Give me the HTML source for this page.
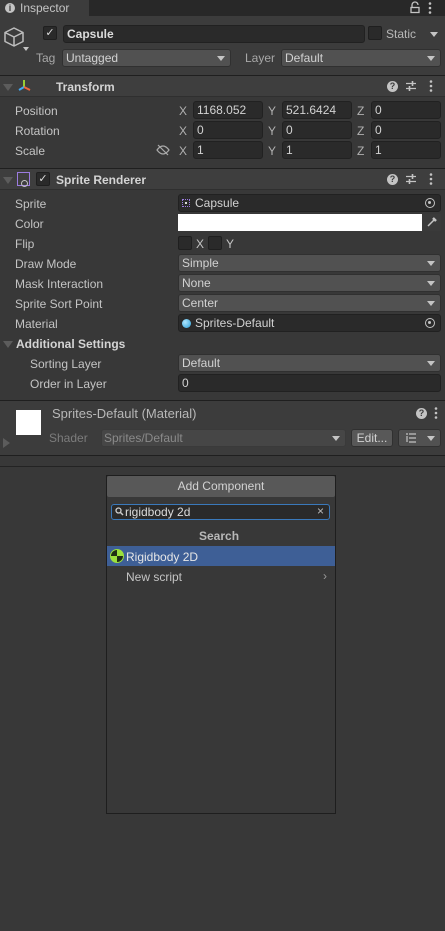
<!DOCTYPE html>
<html><head><meta charset="utf-8"><style>
*{margin:0;padding:0;box-sizing:border-box}
body{width:445px;height:931px;background:#383838;position:relative;overflow:hidden;font-family:"Liberation Sans",sans-serif;font-size:12px;color:#c4c4c4}
div,span,svg{position:absolute}
.t{white-space:nowrap;line-height:14px}
.f{background:#2a2a2a;border:1px solid #212121;border-radius:3px;height:18px;color:#d2d2d2;padding-left:3px;line-height:16px;white-space:nowrap}
.d{background:#515151;border:1px solid #303030;border-radius:3px;height:18px;color:#d2d2d2;padding-left:3px;line-height:16px;white-space:nowrap}
.d:after{content:"";position:absolute;right:5px;top:6px;border-left:4px solid transparent;border-right:4px solid transparent;border-top:5px solid #c4c4c4}
.hdr{left:0;width:445px;background:#3e3e3e;border-top:1px solid #1f1f1f;border-bottom:1px solid #2f2f2f}
.tri{border-left:5px solid transparent;border-right:5px solid transparent;border-top:7px solid #5c5c5c}
.cb{width:14px;height:14px;background:#2a2a2a;border:1px solid #1f1f1f;border-radius:2px}
.b{font-weight:bold;color:#d4d4d4}
.ax{color:#b0b0b0}
.q{width:11px;height:11px;border-radius:50%;background:#c4c4c4;color:#3e3e3e;font-size:9px;font-weight:bold;line-height:11px;text-align:center}
</style></head><body>
<div style="left:0;top:0;width:445px;height:16px;background:#282828"></div>
<div style="left:0;top:0;width:89px;height:16px;background:#3c3c3c"></div>
<div style="left:5px;top:3px;width:10px;height:10px;border-radius:50%;background:#c4c4c4;color:#3c3c3c;font-size:9px;font-weight:bold;line-height:10px;text-align:center">i</div>
<div class="t" style="left:20px;top:1px">Inspector</div>
<svg style="left:409px;top:1px" width="12" height="13"><path d="M3 6V4a3 3 0 0 1 6 0" fill="none" stroke="#c4c4c4" stroke-width="1.3"/><rect x="2" y="6.5" width="8" height="5" fill="none" stroke="#c4c4c4" stroke-width="1.3"/></svg>
<svg style="left:427px;top:1px" width="6" height="14"><circle cx="3" cy="2.5" r="1.3" fill="#c4c4c4"/><circle cx="3" cy="7" r="1.3" fill="#c4c4c4"/><circle cx="3" cy="11.5" r="1.3" fill="#c4c4c4"/></svg>
<div style="left:0;top:16px;width:445px;height:59px;background:#3c3c3c"></div>
<svg style="left:3px;top:26px" width="22" height="22" viewBox="0 0 22 22"><path d="M11 2 L20 6.5 V15.5 L11 20 L2 15.5 V6.5 Z M2 6.5 L11 11 L20 6.5 M11 11 V20" fill="none" stroke="#bdbdbd" stroke-width="1.5" stroke-linejoin="round"/></svg>
<div style="left:23px;top:47px;border-left:3px solid transparent;border-right:3px solid transparent;border-top:4px solid #c4c4c4"></div>
<div class="cb" style="left:43px;top:26px;color:#ddd;font-size:11px;line-height:12px;text-align:center">✓</div>
<div class="f b" style="left:63px;top:25px;width:302px;font-weight:bold;color:#dcdcdc">Capsule</div>
<div class="cb" style="left:368px;top:26px"></div>
<div class="t" style="left:386px;top:27px;color:#b8b8b8">Static</div>
<div style="left:430px;top:32px;border-left:4px solid transparent;border-right:4px solid transparent;border-top:5px solid #c4c4c4"></div>
<div class="t" style="left:36px;top:51px;color:#a8a8a8">Tag</div>
<div class="d" style="left:62px;top:49px;width:169px">Untagged</div>
<div class="t" style="left:245px;top:51px;color:#a8a8a8">Layer</div>
<div class="d" style="left:281px;top:49px;width:160px">Default</div>
<div class="hdr" style="top:75px;height:22px"></div>
<div class="tri" style="left:3px;top:84px"></div>
<svg style="left:17px;top:79px" width="15" height="14"><path d="M7 1V8" stroke="#9acd32" stroke-width="2"/><path d="M7 8L2 11" stroke="#3fa9f5" stroke-width="2"/><path d="M7 8L13 11" stroke="#f0643c" stroke-width="2"/></svg>
<div class="t b" style="left:56px;top:80px">Transform</div>
<div class="q" style="left:387px;top:81px">?</div>
<svg style="left:405px;top:80px" width="12" height="12"><path d="M1 3.5H11M1 8.5H11" stroke="#c4c4c4" stroke-width="1.3"/><path d="M7.5 1V6M4.5 6V11" stroke="#c4c4c4" stroke-width="1.6"/></svg>
<svg style="left:428px;top:79px" width="6" height="14"><circle cx="3" cy="2.5" r="1.3" fill="#c4c4c4"/><circle cx="3" cy="7" r="1.3" fill="#c4c4c4"/><circle cx="3" cy="11.5" r="1.3" fill="#c4c4c4"/></svg>
<div class="t" style="left:15px;top:104px">Position</div>
<div class="t" style="left:15px;top:124px">Rotation</div>
<div class="t" style="left:15px;top:144px">Scale</div>
<svg style="left:156px;top:144px" width="14" height="12"><path d="M1 6 Q4 2 7 2 Q10 2 13 6 Q10 10 7 10 Q4 10 1 6Z" fill="none" stroke="#aaa" stroke-width="1.2"/><path d="M2 1L12 11" stroke="#aaa" stroke-width="1.2"/></svg>
<div class="t ax" style="left:179px;top:104px">X</div><div class="f" style="left:193px;top:101px;width:70px">1168.052</div>
<div class="t ax" style="left:268px;top:104px">Y</div><div class="f" style="left:282px;top:101px;width:70px">521.6424</div>
<div class="t ax" style="left:357px;top:104px">Z</div><div class="f" style="left:371px;top:101px;width:70px">0</div>
<div class="t ax" style="left:179px;top:124px">X</div><div class="f" style="left:193px;top:121px;width:70px">0</div>
<div class="t ax" style="left:268px;top:124px">Y</div><div class="f" style="left:282px;top:121px;width:70px">0</div>
<div class="t ax" style="left:357px;top:124px">Z</div><div class="f" style="left:371px;top:121px;width:70px">0</div>
<div class="t ax" style="left:179px;top:144px">X</div><div class="f" style="left:193px;top:141px;width:70px">1</div>
<div class="t ax" style="left:268px;top:144px">Y</div><div class="f" style="left:282px;top:141px;width:70px">1</div>
<div class="t ax" style="left:357px;top:144px">Z</div><div class="f" style="left:371px;top:141px;width:70px">1</div>
<div class="hdr" style="top:168px;height:22px"></div>
<div class="tri" style="left:3px;top:177px"></div>
<div style="left:17px;top:172px;width:13px;height:14px;border:1px solid #9b7be0"></div>
<div style="left:21px;top:180px;width:7px;height:7px;border:1.5px solid #c4c4c4;border-radius:50%"></div>
<div class="cb" style="left:36px;top:172px;color:#ddd;font-size:11px;line-height:12px;text-align:center">✓</div>
<div class="t b" style="left:56px;top:173px">Sprite Renderer</div>
<div class="q" style="left:387px;top:174px">?</div>
<svg style="left:405px;top:173px" width="12" height="12"><path d="M1 3.5H11M1 8.5H11" stroke="#c4c4c4" stroke-width="1.3"/><path d="M7.5 1V6M4.5 6V11" stroke="#c4c4c4" stroke-width="1.6"/></svg>
<svg style="left:428px;top:172px" width="6" height="14"><circle cx="3" cy="2.5" r="1.3" fill="#c4c4c4"/><circle cx="3" cy="7" r="1.3" fill="#c4c4c4"/><circle cx="3" cy="11.5" r="1.3" fill="#c4c4c4"/></svg>
<div class="t" style="left:15px;top:197px">Sprite</div>
<div class="f" style="left:178px;top:194px;width:263px;padding-left:16px">Capsule</div>
<div style="left:182px;top:199px;width:8px;height:8px;border:1px dotted #9b7be0"><span style="left:2px;top:2px;width:2px;height:2px;background:#ddd"></span></div>
<div style="left:425px;top:198px;width:10px;height:10px;border:1.5px solid #c4c4c4;border-radius:50%"><span style="left:2px;top:2px;width:3px;height:3px;background:#c4c4c4;border-radius:50%"></span></div>
<div class="t" style="left:15px;top:217px">Color</div>
<div style="left:178px;top:214px;width:244px;height:17px;background:#fff"></div>
<div style="left:422px;top:214px;width:19px;height:17px;background:#3a3a3a"></div>
<svg style="left:426px;top:216px" width="12" height="12"><path d="M2 10L8 4" stroke="#c4c4c4" stroke-width="1.5"/><path d="M7 2L10 5" stroke="#c4c4c4" stroke-width="2.5"/></svg>
<div class="t" style="left:15px;top:237px">Flip</div>
<div class="cb" style="left:178px;top:236px"></div><div class="t" style="left:196px;top:237px">X</div>
<div class="cb" style="left:208px;top:236px"></div><div class="t" style="left:226px;top:237px">Y</div>
<div class="t" style="left:15px;top:257px">Draw Mode</div><div class="d" style="left:178px;top:254px;width:263px">Simple</div>
<div class="t" style="left:15px;top:277px">Mask Interaction</div><div class="d" style="left:178px;top:274px;width:263px">None</div>
<div class="t" style="left:15px;top:297px">Sprite Sort Point</div><div class="d" style="left:178px;top:294px;width:263px">Center</div>
<div class="t" style="left:15px;top:317px">Material</div>
<div class="f" style="left:178px;top:314px;width:263px;padding-left:16px">Sprites-Default</div>
<div style="left:182px;top:319px;width:9px;height:9px;border-radius:50%;background:radial-gradient(circle at 35% 35%,#aee6ff,#2a9fd8)"></div>
<div style="left:425px;top:318px;width:10px;height:10px;border:1.5px solid #c4c4c4;border-radius:50%"><span style="left:2px;top:2px;width:3px;height:3px;background:#c4c4c4;border-radius:50%"></span></div>
<div class="tri" style="left:3px;top:341px"></div>
<div class="t b" style="left:16px;top:337px">Additional Settings</div>
<div class="t" style="left:30px;top:357px">Sorting Layer</div><div class="d" style="left:178px;top:354px;width:263px">Default</div>
<div class="t" style="left:30px;top:377px">Order in Layer</div><div class="f" style="left:178px;top:374px;width:263px">0</div>
<div style="left:0;top:400px;width:445px;height:56px;background:#3c3c3c;border-top:1px solid #1f1f1f;border-bottom:1px solid #1f1f1f"></div>
<div style="left:16px;top:410px;width:25px;height:25px;background:#fff"></div>
<div class="t" style="left:52px;top:407px;color:#b8b8b8;font-size:13px">Sprites-Default (Material)</div>
<div class="q" style="left:416px;top:408px;background:#c4c4c4;color:#3c3c3c">?</div>
<svg style="left:433px;top:406px" width="6" height="14"><circle cx="3" cy="2.5" r="1.3" fill="#c4c4c4"/><circle cx="3" cy="7" r="1.3" fill="#c4c4c4"/><circle cx="3" cy="11.5" r="1.3" fill="#c4c4c4"/></svg>
<div style="left:3px;top:438px;border-top:5px solid transparent;border-bottom:5px solid transparent;border-left:7px solid #5c5c5c"></div>
<div class="t" style="left:49px;top:431px;color:#7c7c7c">Shader</div>
<div class="d" style="left:101px;top:429px;width:245px;background:#464646;border-color:#3a3a3a"></div>
<div class="t" style="left:104px;top:431px;color:#8a8a8a">Sprites/Default</div>
<div style="left:351px;top:429px;width:42px;height:18px;background:#585858;border:1px solid #303030;border-radius:3px;color:#d2d2d2;text-align:center;line-height:16px">Edit...</div>
<div class="d" style="left:398px;top:429px;width:43px"></div>
<svg style="left:405px;top:433px" width="12" height="10"><path d="M1 1H3M4 1H11M4 5H11M4 9H11M2 3V9" stroke="#c4c4c4" stroke-width="1.2" fill="none"/></svg>
<div style="left:0;top:466px;width:445px;height:1px;background:#232323"></div>
<div style="left:106px;top:475px;width:230px;height:339px;background:#383838;border:1px solid #1e1e1e"></div>
<div style="left:107px;top:476px;width:228px;height:21px;background:#585858;border-radius:2px;color:#d2d2d2;text-align:center;line-height:21px">Add Component</div>
<div style="left:111px;top:504px;width:219px;height:16px;background:#2a2a2a;border:1px solid #3a79bb;border-radius:3px"></div>
<svg style="left:115px;top:507px" width="9" height="9"><circle cx="3.5" cy="3.5" r="2.5" fill="none" stroke="#ccc" stroke-width="1.3"/><path d="M5.5 5.5L8 8" stroke="#ccc" stroke-width="1.5"/></svg>
<div class="t" style="left:125px;top:505px;color:#dcdcdc">rigidbody 2d</div>
<div class="t" style="left:317px;top:504px;color:#bbb">×</div>
<div class="t b" style="left:199px;top:529px;color:#b8b8b8">Search</div>
<div style="left:107px;top:546px;width:228px;height:20px;background:#3e5f96"></div>
<div style="left:110px;top:549px;width:14px;height:14px;border-radius:50%;background:conic-gradient(#9be03c 0 25%,#1f2f14 0 50%,#9be03c 0 75%,#1f2f14 0);border:1.5px solid #9be03c"></div>
<div class="t" style="left:126px;top:550px;color:#e6e6e6">Rigidbody 2D</div>
<div class="t" style="left:126px;top:570px">New script</div>
<div class="t" style="left:323px;top:569px;color:#999">›</div>
</body></html>
